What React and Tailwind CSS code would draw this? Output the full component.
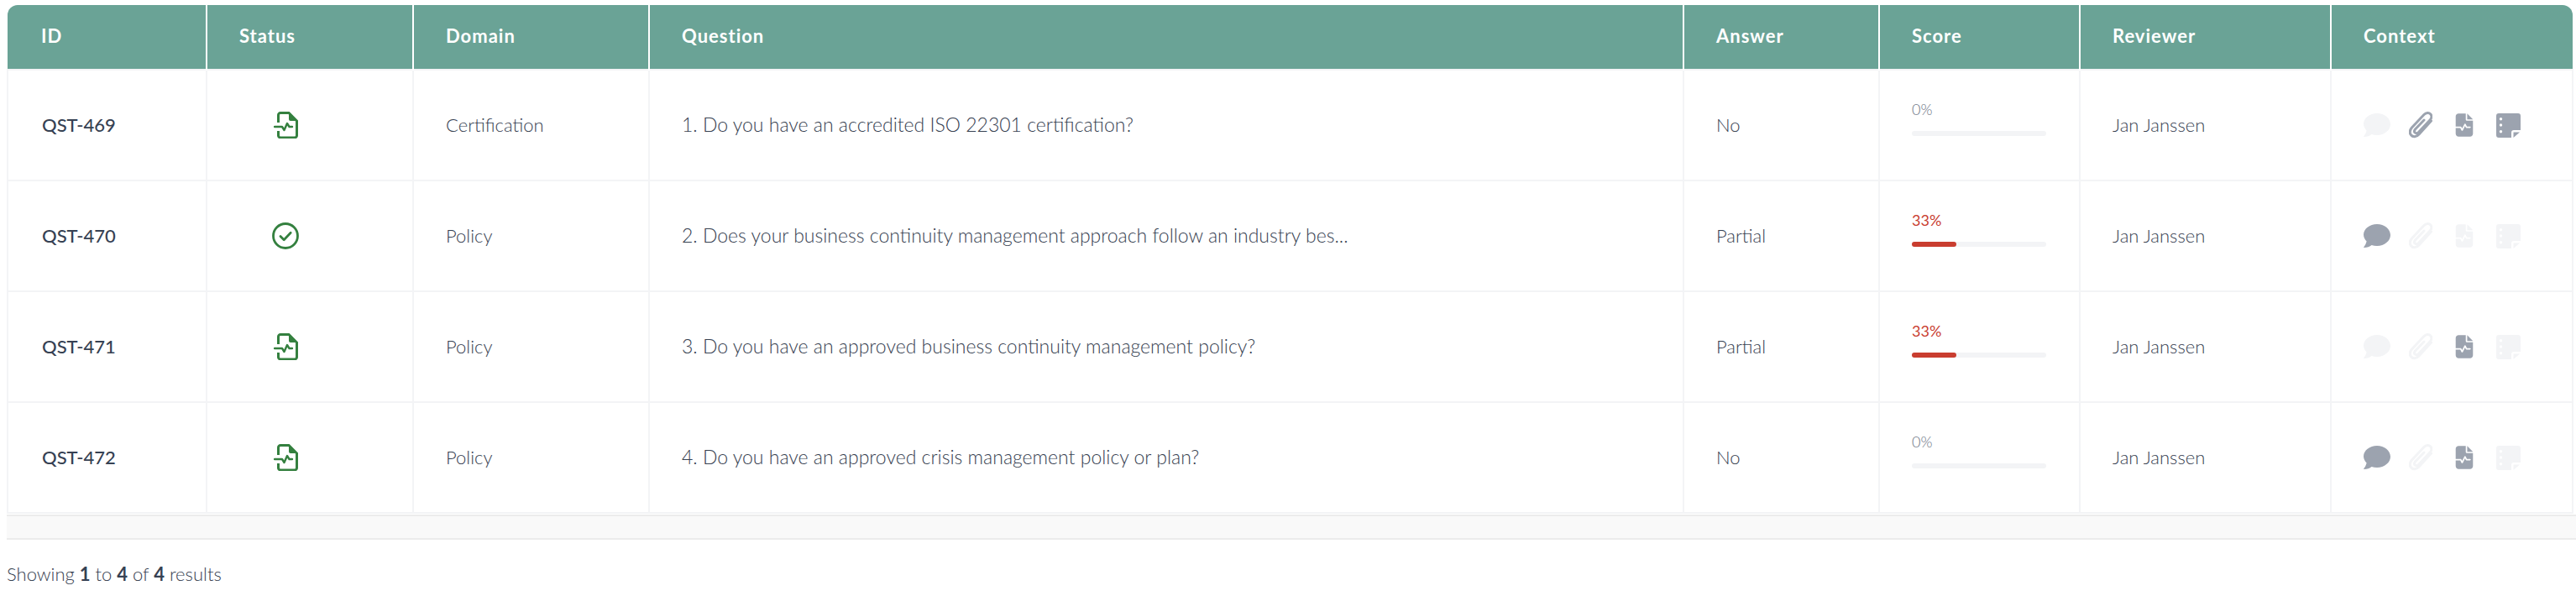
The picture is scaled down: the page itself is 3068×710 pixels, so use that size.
import { FaFileWaveform } from 'react-icons/fa6';

const rows = [
  { id: 'QST-469', status: 'wave', domain: 'Certification', question: '1. Do you have an accredited ISO 22301 certification?', answer: 'No', score: 0, on: [false, true, true, true] },
  { id: 'QST-470', status: 'check', domain: 'Policy', question: '2. Does your business continuity management approach follow an industry bes...', answer: 'Partial', score: 33, on: [true, false, false, false] },
  { id: 'QST-471', status: 'wave', domain: 'Policy', question: '3. Do you have an approved business continuity management policy?', answer: 'Partial', score: 33, on: [false, false, true, false] },
  { id: 'QST-472', status: 'wave', domain: 'Policy', question: '4. Do you have an approved crisis management policy or plan?', answer: 'No', score: 0, on: [true, false, true, false] },
];

const headers = [
  ['ID', 'w-[237px] pl-10'],
  ['Status', 'w-[246px] pl-[38px]'],
  ['Domain', 'w-[281px] pl-[38px]'],
  ['Question', 'w-[1232px] pl-[38px]'],
  ['Answer', 'w-[233px] pl-[38px]'],
  ['Score', 'w-[239px] pl-[38px]'],
  ['Reviewer', 'w-[299px] pl-[38px]'],
  ['Context', 'w-[288px] pl-[38px]'],
];

const CommentIcon = ({ className }) => (
  <svg viewBox="0 0 32 28" className={className} fill="currentColor">
    <path d="M16 0C7.2 0 0 5.6 0 12.6c0 3 1.4 5.800 3.600 8C3 23.500 1.400 26 .2 27.400c-.3.300 0 .6.400.6 3.600 0 6.700-1.300 9-3 1.900.6 4 .9 6.400.9 8.800 0 16-5.800 16-12.900S24.800 0 16 0z" />
  </svg>
);

const ClipIcon = ({ className }) => (
  <svg viewBox="0 0 28 32" className={className} fill="none" stroke="currentColor" strokeWidth="3" strokeLinecap="round">
    <path d="M26.500 11 12 27C9 30.500 4.500 30.500 2.700 28 .5 25.500 1 22 3.500 19L18 3.500C20.500 1 24 1 25.800 3 27.500 5 27 8 25 10L11.500 24.500C10 26 8.200 26 7.200 25 6.200 24 6.300 22.500 7.500 21L18 10" />
  </svg>
);

const NoteIcon = ({ className }) => (
  <svg viewBox="0 0 29 29" className={className}>
    <path fill="currentColor" d="M3 0h23a3 3 0 0 1 3 3v17h-8a3 3 0 0 0-3 3v6H3a3 3 0 0 1-3-3V3a3 3 0 0 1 3-3z" />
    <path fill="currentColor" d="M28 22.500 20.500 29v-6.500z" />
    <circle cx="5.500" cy="6.700" r="1.700" fill="#fff" />
    <circle cx="5.500" cy="14" r="1.700" fill="#fff" />
    <circle cx="5.500" cy="21.700" r="1.700" fill="#fff" />
  </svg>
);

const GreenWaveIcon = () => (
  <svg viewBox="0 0 29 32" className="w-[29px] h-8 ml-0.5 text-[#34803f]" fill="none" stroke="currentColor">
    <path strokeWidth="3" d="M5.500 13V4a2.500 2.500 0 0 1 2.500-2.500h10l9.500 9.500v17.500a2.500 2.500 0 0 1-2.500 2.500H8a2.500 2.500 0 0 1-2.500-2.500V23" />
    <path fill="currentColor" stroke="none" d="M18 1.500 27.500 11H20a2 2 0 0 1-2-2z" />
    <path strokeWidth="2.400" strokeLinejoin="round" strokeLinecap="round" d="M1 18h9l2.500 4 3.500-8 2.500 4H22" />
  </svg>
);

const CheckIcon = () => (
  <svg viewBox="0 0 32 32" className="w-8 h-8 text-[#34803f]" fill="none" stroke="currentColor" strokeWidth="2.800">
    <circle cx="16" cy="16" r="14.500" />
    <path strokeLinecap="round" strokeLinejoin="round" d="m10 16.500 4.200 4.200 8-8.400" />
  </svg>
);

const tone = (active) => (active ? 'text-[#9ca3af]' : 'text-gray-100');

const App = () => {
  return (
    <div className="w-[3068px] h-[710px] bg-white pt-1.5 pl-2 font-['Lato',sans-serif] text-[22px] font-light text-[#374151]">
      <table className="table-fixed border-collapse w-[3055px]">
        <thead>
          <tr className="h-[77px] bg-[#6aa396] text-white">
            {headers.map(([label, width], index) => (
              <th
                key={label}
                className={`${width} pb-1 text-left text-[22px] font-bold tracking-[1px] ${index < 7 ? 'border-r-2 border-white' : ''} ${index === 0 ? 'rounded-tl-xl' : ''} ${index === 7 ? 'rounded-tr-xl' : ''}`}
              >
                {label}
              </th>
            ))}
          </tr>
        </thead>
        <tbody>
          {rows.map((row) => (
            <tr key={row.id} className="h-[132px]">
              <td className="pl-10 pb-0.5 border-2 border-gray-100 text-[22px] font-medium text-gray-700">{row.id}</td>
              <td className="pl-[77px] border-2 border-gray-100">
                {row.status === 'check' ? <CheckIcon /> : <GreenWaveIcon />}
              </td>
              <td className="pl-[38px] pb-0.5 border-2 border-gray-100">{row.domain}</td>
              <td className="pl-[38px] pb-0.5 border-2 border-gray-100 text-[23px]">{row.question}</td>
              <td className="pl-[38px] pb-0.5 border-2 border-gray-100">{row.answer}</td>
              <td className="pl-[38px] pb-2.5 border-2 border-gray-100">
                <div className={`text-[18px] leading-[22px] mb-[15px] -mt-2 ${row.score > 0 ? 'text-[#c93d2f] font-normal' : 'text-gray-500'}`}>{row.score}%</div>
                <div className="w-40 h-1.5 rounded-full bg-gray-100">
                  {row.score > 0 && <div className="h-full rounded-full bg-[#c93d2f]" style={{ width: `${row.score}%` }} />}
                </div>
              </td>
              <td className="pl-[38px] pb-0.5 border-2 border-gray-100">Jan Janssen</td>
              <td className="pl-[38px] border-2 border-gray-100">
                <div className="flex items-center">
                  <CommentIcon className={`w-8 h-7 ${tone(row.on[0])}`} />
                  <ClipIcon className={`w-7 h-8 ml-[22px] ${tone(row.on[1])}`} />
                  <FaFileWaveform className={`w-6 h-8 ml-[26px] ${tone(row.on[2])}`} />
                  <NoteIcon className={`w-[29px] h-[29px] ml-[26px] ${tone(row.on[3])}`} />
                </div>
              </td>
            </tr>
          ))}
        </tbody>
      </table>
      <div className="h-[30px] mt-px bg-[#f9f9f9] border-y-2 border-[#ececec]" />
      <p className="mt-6 text-[22px]">
        Showing <span className="font-bold text-gray-700">1</span> to <span className="font-bold text-gray-700">4</span> of <span className="font-bold text-gray-700">4</span> results
      </p>
    </div>
  );
};

export default App;
